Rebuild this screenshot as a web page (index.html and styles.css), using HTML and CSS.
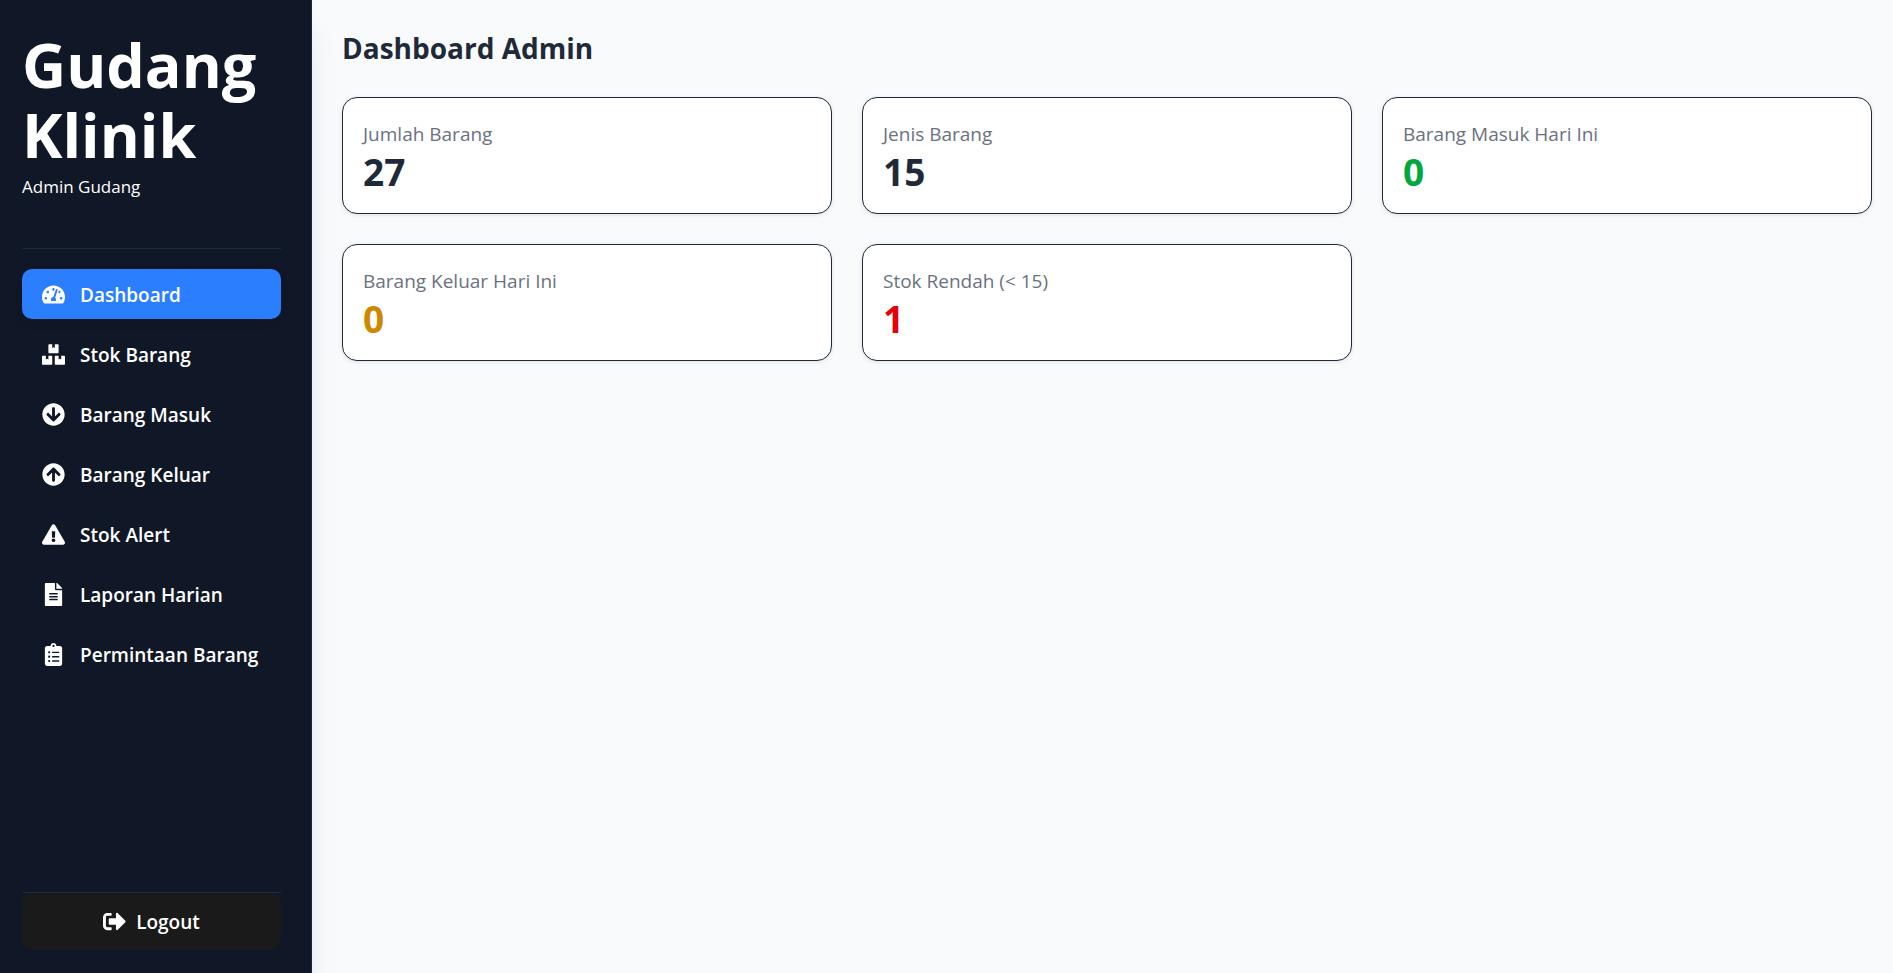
FILE: index.html
```html
<!DOCTYPE html>
<html lang="id">
<head>
<meta charset="utf-8">
<meta name="viewport" content="width=device-width, initial-scale=1">
<title>Gudang Klinik</title>
<link rel="stylesheet" href="styles.css">
</head>
<body>
<div class="app">
  <aside class="sidebar">
    <header class="brand">
      <h1 class="brand-name">Gudang Klinik</h1>
      <p class="brand-role">Admin Gudang</p>
    </header>
    <nav class="nav">
      <a class="nav-link active" href="#" aria-current="page">
        <svg class="icon" viewBox="0 0 576 512" aria-hidden="true"><path d="M288 32C128.940 32 0 160.940 0 320c0 52.800 14.250 102.260 39.060 144.800 5.610 9.620 16.300 15.200 27.440 15.200h443c11.140 0 21.830-5.580 27.440-15.200C561.750 422.260 576 372.800 576 320c0-159.060-128.940-288-288-288zm0 64c14.710 0 26.580 10.130 30.320 23.650-1.110 2.260-2.640 4.230-3.450 6.670l-9.220 27.670c-5.130 3.490-10.970 6.010-17.640 6.010-17.670 0-32-14.330-32-32S270.330 96 288 96zM96 384c-17.670 0-32-14.330-32-32s14.330-32 32-32 32 14.330 32 32-14.330 32-32 32zm48-160c-17.670 0-32-14.330-32-32s14.330-32 32-32 32 14.330 32 32-14.330 32-32 32zm246.770-72.410l-61.330 184C343.130 347.330 352 364.540 352 384c0 11.720-3.380 22.550-8.880 32H232.880c-5.500-9.450-8.880-20.280-8.880-32 0-33.940 26.500-61.430 59.900-63.590l61.340-184.010c4.170-12.560 17.730-19.450 30.360-15.170 12.570 4.190 19.350 17.790 15.170 30.360zm14.660 57.200l15.520-46.550c3.470-1.290 7.130-2.230 11.050-2.230 17.670 0 32 14.330 32 32s-14.330 32-32 32c-11.380-.010-20.890-6.280-26.570-15.220zM480 384c-17.670 0-32-14.330-32-32s14.330-32 32-32 32 14.330 32 32-14.330 32-32 32z"/></svg>
        <span class="nav-text">Dashboard</span>
      </a>
      <a class="nav-link" href="#">
        <svg class="icon" viewBox="0 0 576 512" aria-hidden="true"><path d="M560 288h-80v96l-32-21.300-32 21.300v-96h-80c-8.800 0-16 7.200-16 16v192c0 8.800 7.200 16 16 16h224c8.800 0 16-7.200 16-16V304c0-8.800-7.200-16-16-16zm-384-64h224c8.800 0 16-7.200 16-16V16c0-8.800-7.200-16-16-16h-80v96l-32-21.300L256 96V0h-80c-8.800 0-16 7.200-16 16v192c0 8.800 7.200 16 16 16zm64 64h-80v96l-32-21.300L96 384v-96H16c-8.800 0-16 7.200-16 16v192c0 8.800 7.200 16 16 16h224c8.800 0 16-7.200 16-16V304c0-8.800-7.200-16-16-16z"/></svg>
        <span class="nav-text">Stok Barang</span>
      </a>
      <a class="nav-link" href="#">
        <svg class="icon" viewBox="0 0 512 512" aria-hidden="true"><path d="M504 256c0 137-111 248-248 248S8 393 8 256 119 8 256 8s248 111 248 248zm-143.600-28.900L288 302.600V120c0-13.300-10.700-24-24-24h-16c-13.300 0-24 10.700-24 24v182.600l-72.400-75.500c-9.300-9.700-24.800-9.900-34.300-.4l-10.900 11c-9.400 9.400-9.400 24.600 0 33.900L239 404.300c9.400 9.400 24.600 9.400 33.900 0l132.700-132.700c9.400-9.400 9.400-24.600 0-33.900l-10.900-11c-9.500-9.500-25-9.300-34.300.4z"/></svg>
        <span class="nav-text">Barang Masuk</span>
      </a>
      <a class="nav-link" href="#">
        <svg class="icon" viewBox="0 0 512 512" aria-hidden="true"><path transform="rotate(180 256 256)" d="M504 256c0 137-111 248-248 248S8 393 8 256 119 8 256 8s248 111 248 248zm-143.600-28.900L288 302.600V120c0-13.300-10.700-24-24-24h-16c-13.300 0-24 10.700-24 24v182.600l-72.400-75.500c-9.300-9.700-24.800-9.900-34.300-.4l-10.900 11c-9.400 9.400-9.400 24.600 0 33.900L239 404.300c9.400 9.400 24.600 9.400 33.900 0l132.700-132.700c9.400-9.400 9.400-24.600 0-33.900l-10.900-11c-9.500-9.500-25-9.300-34.300.4z"/></svg>
        <span class="nav-text">Barang Keluar</span>
      </a>
      <a class="nav-link" href="#">
        <svg class="icon" viewBox="0 0 576 512" aria-hidden="true"><path d="M569.517 440.013C587.975 472.007 564.806 512 527.940 512H48.054c-36.937 0-59.999-40.055-41.577-71.987L246.423 23.985c18.467-32.009 64.720-31.951 83.154 0l239.940 416.028zM288 354c-25.405 0-46 20.595-46 46s20.595 46 46 46 46-20.595 46-46-20.595-46-46-46zm-43.673-165.346l7.418 136c.347 6.364 5.609 11.346 11.982 11.346h48.546c6.373 0 11.635-4.982 11.982-11.346l7.418-136c.375-6.874-5.098-12.654-11.982-12.654h-63.383c-6.884 0-12.356 5.780-11.981 12.654z"/></svg>
        <span class="nav-text">Stok Alert</span>
      </a>
      <a class="nav-link" href="#">
        <svg class="icon" viewBox="0 0 384 512" aria-hidden="true"><path d="M224 136V0H24C10.700 0 0 10.700 0 24v464c0 13.300 10.700 24 24 24h336c13.300 0 24-10.700 24-24V160H248c-13.200 0-24-10.800-24-24zm64 236c0 6.600-5.400 12-12 12H108c-6.600 0-12-5.400-12-12v-8c0-6.600 5.400-12 12-12h168c6.600 0 12 5.400 12 12v8zm0-64c0 6.600-5.400 12-12 12H108c-6.600 0-12-5.400-12-12v-8c0-6.600 5.400-12 12-12h168c6.600 0 12 5.400 12 12v8zm0-72v8c0 6.600-5.400 12-12 12H108c-6.600 0-12-5.400-12-12v-8c0-6.600 5.400-12 12-12h168c6.600 0 12 5.400 12 12zm96-114.100v6.100H256V0h6.100c6.400 0 12.500 2.500 17 7l97.900 98c4.500 4.500 7 10.600 7 16.900z"/></svg>
        <span class="nav-text">Laporan Harian</span>
      </a>
      <a class="nav-link" href="#">
        <svg class="icon" viewBox="0 0 384 512" aria-hidden="true"><path d="M336 64h-80c0-35.300-28.700-64-64-64s-64 28.700-64 64H48C21.500 64 0 85.500 0 112v352c0 26.500 21.500 48 48 48h288c26.500 0 48-21.500 48-48V112c0-26.500-21.500-48-48-48zM96 424c-13.300 0-24-10.700-24-24s10.700-24 24-24 24 10.700 24 24-10.700 24-24 24zm0-96c-13.300 0-24-10.700-24-24s10.700-24 24-24 24 10.700 24 24-10.700 24-24 24zm0-96c-13.300 0-24-10.700-24-24s10.700-24 24-24 24 10.700 24 24-10.700 24-24 24zm96-192c13.300 0 24 10.700 24 24s-10.700 24-24 24-24-10.700-24-24 10.700-24 24-24zm128 368c0 4.400-3.600 8-8 8H168c-4.400 0-8-3.600-8-8v-16c0-4.400 3.600-8 8-8h144c4.400 0 8 3.600 8 8v16zm0-96c0 4.400-3.600 8-8 8H168c-4.400 0-8-3.600-8-8v-16c0-4.400 3.600-8 8-8h144c4.400 0 8 3.600 8 8v16zm0-96c0 4.400-3.600 8-8 8H168c-4.400 0-8-3.600-8-8v-16c0-4.400 3.600-8 8-8h144c4.400 0 8 3.600 8 8v16z"/></svg>
        <span class="nav-text">Permintaan Barang</span>
      </a>
    </nav>
    <footer class="sidebar-footer">
      <button class="logout" type="button">
        <svg class="icon" viewBox="0 0 512 512" aria-hidden="true"><path d="M497 273L329 441c-15 15-41 4.500-41-17v-96H152c-13.300 0-24-10.700-24-24v-96c0-13.300 10.700-24 24-24h136V88c0-21.400 25.900-32 41-17l168 168c9.300 9.400 9.300 24.600 0 34zM192 436v-40c0-6.600-5.400-12-12-12H96c-17.700 0-32-14.300-32-32V160c0-17.700 14.300-32 32-32h84c6.600 0 12-5.400 12-12V76c0-6.600-5.400-12-12-12H96c-53 0-96 43-96 96v192c0 53 43 96 96 96h84c6.600 0 12-5.400 12-12z"/></svg>
        <span class="nav-text">Logout</span>
      </button>
    </footer>
  </aside>
  <main class="content">
    <h2 class="page-title">Dashboard Admin</h2>
    <section class="cards">
      <article class="card">
        <h3 class="card-label">Jumlah Barang</h3>
        <p class="card-value">27</p>
      </article>
      <article class="card">
        <h3 class="card-label">Jenis Barang</h3>
        <p class="card-value">15</p>
      </article>
      <article class="card">
        <h3 class="card-label">Barang Masuk Hari Ini</h3>
        <p class="card-value green">0</p>
      </article>
      <article class="card">
        <h3 class="card-label">Barang Keluar Hari Ini</h3>
        <p class="card-value amber">0</p>
      </article>
      <article class="card">
        <h3 class="card-label">Stok Rendah (&lt; 15)</h3>
        <p class="card-value red">1</p>
      </article>
    </section>
  </main>
</div>
</body>
</html>
```
FILE: styles.css
```css
*,
*::before,
*::after {
  box-sizing: border-box;
}

body,
h1,
h2,
h3,
p {
  margin: 0;
}

body {
  font-family: "Segoe UI", "Open Sans", "Noto Sans", sans-serif;
  font-size: 19px;
  line-height: 30px;
  color: #1e2939;
  background: #f9fafc;
}

.app {
  display: flex;
  min-height: 100vh;
}

.sidebar {
  display: flex;
  flex-direction: column;
  flex: 0 0 312px;
  padding: 30px 30px 24px 22px;
  color: #fff;
  background: #101828;
  border-right: 1px solid #1e2939;
  box-shadow: 0 25px 31px -6px rgba(0, 0, 0, 0.1);
}

.brand {
  padding-bottom: 46px;
  border-bottom: 1px solid #1e2939;
}

.brand-name {
  font-size: 61px;
  line-height: 70px;
  font-weight: 700;
}

.brand-role {
  margin-top: 2px;
  font-size: 17px;
}

.nav {
  display: flex;
  flex: 1;
  flex-direction: column;
  gap: 10px;
  margin-top: 20px;
}

.nav-link {
  display: flex;
  align-items: center;
  gap: 15px;
  padding: 10px 20px;
  font-weight: 600;
  color: #fff;
  text-decoration: none;
  white-space: nowrap;
  border-radius: 10px;
}

.nav-link.active {
  background: #2b7fff;
  box-shadow: 0 4px 8px rgba(0, 0, 0, 0.1);
}

.nav-text {
  padding-top: 2px;
  line-height: 28px;
}

.icon {
  flex: none;
  width: 23px;
  height: 23px;
  fill: currentColor;
}

.sidebar-footer {
  border-top: 1px solid #1e2939;
}

.logout {
  display: flex;
  align-items: center;
  justify-content: center;
  gap: 10px;
  width: 100%;
  padding: 13px 20px;
  font: inherit;
  font-weight: 600;
  color: #fff;
  background: #1a1a1a;
  border: 0;
  border-radius: 10px;
}

.content {
  flex: 1;
  padding: 30px 21px 30px 30px;
}

.page-title {
  font-size: 28px;
  line-height: 37px;
  font-weight: 700;
}

.cards {
  display: grid;
  grid-template-columns: repeat(3, 1fr);
  gap: 30px;
  margin-top: 30px;
}

.card {
  padding: 21px 20px 19px;
  background: #fff;
  border: 1px solid #1e2939;
  border-radius: 15px;
  box-shadow: 0 1px 4px rgba(0, 0, 0, 0.1);
}

.card-label {
  font-size: 19px;
  font-weight: 400;
  color: #6a7282;
}

.card-value {
  font-size: 37px;
  line-height: 45px;
  font-weight: 700;
}

.green {
  color: #00a63e;
}

.amber {
  color: #d08700;
}

.red {
  color: #e7000b;
}
```
